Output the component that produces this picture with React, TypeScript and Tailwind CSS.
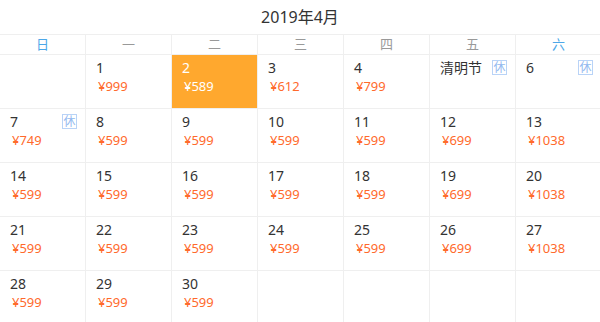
import React from 'react';

type Day = {
  day: number;
  label?: string;
  price?: number;
  rest?: boolean;
};

const WEEKDAYS = ['日', '一', '二', '三', '四', '五', '六'];

const PRICES: Record<number, number> = {
  1: 999, 2: 589, 3: 612, 4: 799, 7: 749,
  8: 599, 9: 599, 10: 599, 11: 599, 12: 699, 13: 1038,
  14: 599, 15: 599, 16: 599, 17: 599, 18: 599, 19: 699, 20: 1038,
  21: 599, 22: 599, 23: 599, 24: 599, 25: 599, 26: 699, 27: 1038,
  28: 599, 29: 599, 30: 599,
};

const SELECTED = 2;
const FIRST_WEEKDAY = 1; // 2019-04-01 is a Monday

function buildCells(): (Day | null)[] {
  const cells: (Day | null)[] = [];
  for (let i = 0; i < FIRST_WEEKDAY; i++) cells.push(null);
  for (let d = 1; d <= 30; d++) {
    cells.push({
      day: d,
      label: d === 5 ? '清明节' : undefined,
      price: PRICES[d],
      rest: d === 5 || d === 6 || d === 7,
    });
  }
  while (cells.length % 7 !== 0) cells.push(null);
  return cells;
}

function Cell({ item }: { item: Day | null }) {
  const selected = item?.day === SELECTED;
  return (
    <div
      className={`relative h-[54px] border-b border-r border-[#efefef] ${
        selected ? 'bg-[#ffa82e]' : 'bg-white'
      }`}
    >
      {item && (
        <div className="pl-[10px] pt-[4px]">
          <div
            className={`h-[18px] text-[14px] leading-[18px] ${
              selected ? 'text-white' : 'text-[#333]'
            }`}
          >
            {item.label ?? item.day}
          </div>
          {item.price !== undefined && (
            <div
              className={`ml-[2px] mt-[1px] text-[13px] leading-[17px] ${
                selected ? 'text-white' : 'text-[#ff6a2c]'
              }`}
            >
              ¥{item.price}
            </div>
          )}
        </div>
      )}
      {item?.rest && (
        <span className="absolute right-[8px] top-[5px] flex h-[15px] w-[15px] items-center justify-center border border-[#b9d3f7] text-[12px] leading-none text-[#93b9ef]">
          休
        </span>
      )}
    </div>
  );
}

export default function App() {
  const cells = buildCells();

  return (
    <div
      className="h-[322px] w-[600px] overflow-hidden bg-white"
      style={{ fontFamily: '"Noto Sans", "Noto Sans CJK SC", sans-serif' }}
    >
      <div className="flex h-[34px] items-center justify-center text-[16px] text-[#333]">
        2019年4月
      </div>

      <div className="grid w-[602px] grid-cols-[repeat(7,86px)] border-t border-[#efefef]">
        {WEEKDAYS.map((w, i) => (
          <div
            key={w}
            className={`flex h-[20px] items-center justify-center border-b border-r border-[#efefef] text-[13px] ${
              i === 0 || i === 6 ? 'text-[#4da7e8]' : 'text-[#999]'
            }`}
          >
            {w}
          </div>
        ))}

        {cells.map((item, i) => (
          <Cell key={i} item={item} />
        ))}
      </div>
    </div>
  );
}
